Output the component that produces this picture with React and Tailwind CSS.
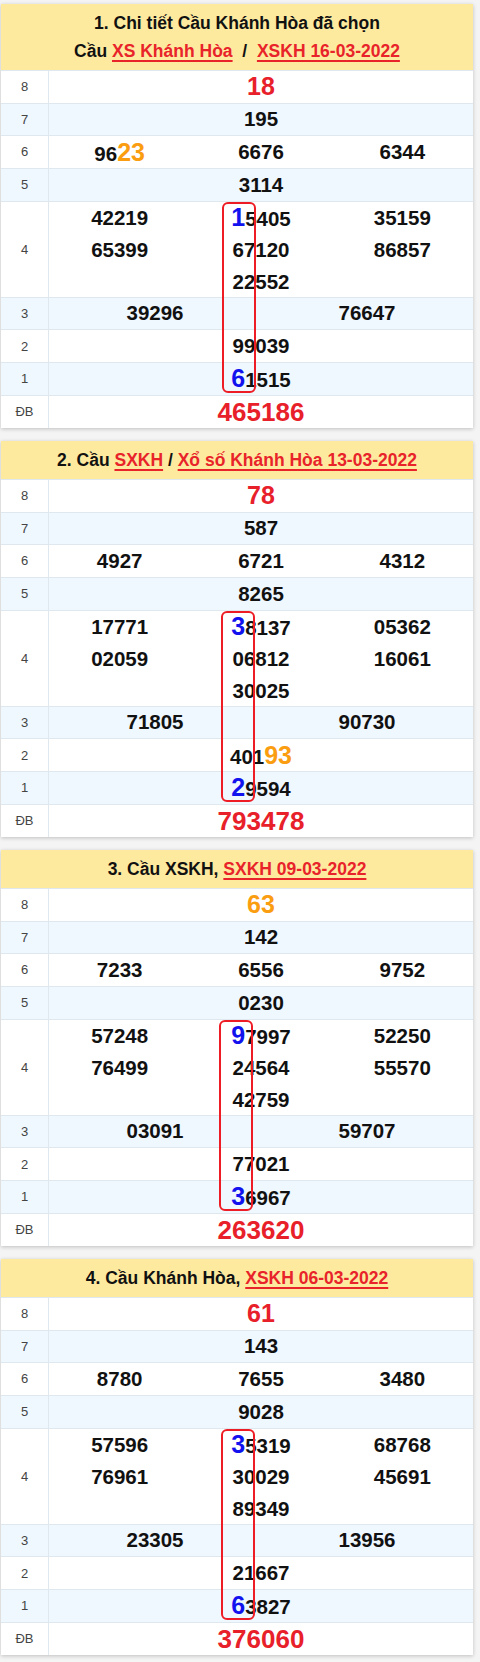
import React from "react";

const font = { fontFamily: '"Liberation Sans", Arial, sans-serif' };

// {x} = blue highlight digit, [x] = orange highlight digits
function Num({ v }) {
    if (!v) return null;
    const parts = [];
    const re = /\{([^}]*)\}|\[([^\]]*)\]|([^{\[]+)/g;
    let m;
    let i = 0;
    while ((m = re.exec(v))) {
        if (m[1]) parts.push(<span key={i++} className="text-[25px] text-[#1212ee]">{m[1]}</span>);
        else if (m[2]) parts.push(<span key={i++} className="text-[25px] text-[#fa9d10]">{m[2]}</span>);
        else parts.push(<span key={i++}>{m[3]}</span>);
    }
    return <span className="text-[20.5px] font-bold text-[#111] leading-none">{parts}</span>;
}

const Link = ({ children }) => (
    <span className="text-[#e8232a] underline decoration-[1.5px] underline-offset-[3px]">{children}</span>
);

const cards = [
    {
        title: (
            <>
                <div>1. Chi tiết Cầu Khánh Hòa đã chọn</div>
                <div>
                    Cầu <Link>XS Khánh Hòa</Link>{"\u00a0 / \u00a0"}<Link>XSKH 16-03-2022</Link>
                </div>
            </>
        ),
        box: 221,
        g8: ["18", "red"],
        g7: "195",
        g6: ["96[23]", "6676", "6344"],
        g5: "3114",
        g4: [["42219", "{1}5405", "35159"], ["65399", "67120", "86857"], ["", "22552", ""]],
        g3: ["39296", "76647"],
        g2: "99039",
        g1: "{6}1515",
        db: "465186",
    },
    {
        title: (
            <div>
                2. Cầu <Link>SXKH</Link> / <Link>Xổ số Khánh Hòa 13-03-2022</Link>
            </div>
        ),
        box: 219.5,
        g8: ["78", "red"],
        g7: "587",
        g6: ["4927", "6721", "4312"],
        g5: "8265",
        g4: [["17771", "{3}8137", "05362"], ["02059", "06812", "16061"], ["", "30025", ""]],
        g3: ["71805", "90730"],
        g2: "401[93]",
        g1: "{2}9594",
        db: "793478",
    },
    {
        title: (
            <div>
                3. Cầu XSKH, <Link>SXKH 09-03-2022</Link>
            </div>
        ),
        box: 217.5,
        g8: ["63", "orange"],
        g7: "142",
        g6: ["7233", "6556", "9752"],
        g5: "0230",
        g4: [["57248", "{9}7997", "52250"], ["76499", "24564", "55570"], ["", "42759", ""]],
        g3: ["03091", "59707"],
        g2: "77021",
        g1: "{3}6967",
        db: "263620",
    },
    {
        title: (
            <div>
                4. Cầu Khánh Hòa, <Link>XSKH 06-03-2022</Link>
            </div>
        ),
        box: 220,
        g8: ["61", "red"],
        g7: "143",
        g6: ["8780", "7655", "3480"],
        g5: "9028",
        g4: [["57596", "{3}5319", "68768"], ["76961", "30029", "45691"], ["", "89349", ""]],
        g3: ["23305", "13956"],
        g2: "21667",
        g1: "{6}3827",
        db: "376060",
    },
];

function Row({ label, blue, tall, children }) {
    return (
        <div className={`flex border-t border-[#dfe7ef] ${tall ? "h-[96px]" : "h-[32.7px]"} ${blue ? "bg-[#eff7ff]" : "bg-white"}`}>
            <div className="w-[48px] shrink-0 border-r border-[#dfe7ef] flex items-center justify-center text-[13px] text-[#444]">
                {label}
            </div>
            <div className="flex-1">{children}</div>
        </div>
    );
}

const Center = ({ children }) => (
    <div className="h-full flex items-center justify-center">{children}</div>
);

function Card({ c }) {
    return (
        <div className="w-[472px] bg-white shadow-[0_1px_4px_rgba(0,0,0,0.22)]">
            <div className="bg-[#feea9f] py-[5px] text-center font-bold text-[17.5px] leading-[28px] text-[#111]">
                {c.title}
            </div>
            <div className="relative">
                <Row label="8">
                    <Center>
                        <span className={`text-[25px] font-bold leading-none ${c.g8[1] === "red" ? "text-[#e8202a]" : "text-[#fa9d10]"}`}>
                            {c.g8[0]}
                        </span>
                    </Center>
                </Row>
                <Row label="7" blue>
                    <Center><Num v={c.g7} /></Center>
                </Row>
                <Row label="6">
                    <div className="grid grid-cols-3 h-full">
                        {c.g6.map((v, i) => (
                            <Center key={i}><Num v={v} /></Center>
                        ))}
                    </div>
                </Row>
                <Row label="5" blue>
                    <Center><Num v={c.g5} /></Center>
                </Row>
                <Row label="4" tall>
                    <div className="grid grid-cols-3 h-full">
                        {c.g4.flat().map((v, i) => (
                            <div key={i} className="h-[32px] flex items-center justify-center"><Num v={v} /></div>
                        ))}
                    </div>
                </Row>
                <Row label="3" blue>
                    <div className="grid grid-cols-2 h-full">
                        {c.g3.map((v, i) => (
                            <Center key={i}><Num v={v} /></Center>
                        ))}
                    </div>
                </Row>
                <Row label="2">
                    <Center><Num v={c.g2} /></Center>
                </Row>
                <Row label="1" blue>
                    <Center><Num v={c.g1} /></Center>
                </Row>
                <Row label="ĐB">
                    <Center>
                        <span className="text-[26px] font-bold leading-none text-[#e8202a]">{c.db}</span>
                    </Center>
                </Row>
                <div
                    className="absolute top-[132px] h-[191px] w-[34px] border-2 border-[#ee1c24] rounded-[6px]"
                    style={{ left: c.box }}
                />
            </div>
        </div>
    );
}

export default function App() {
    return (
        <div style={font} className="min-h-[1662px] bg-[#f4f4f4] pt-[4px] pl-[1px] flex flex-col gap-[13.5px]">
            {cards.map((c, i) => (
                <Card key={i} c={c} />
            ))}
        </div>
    );
}
